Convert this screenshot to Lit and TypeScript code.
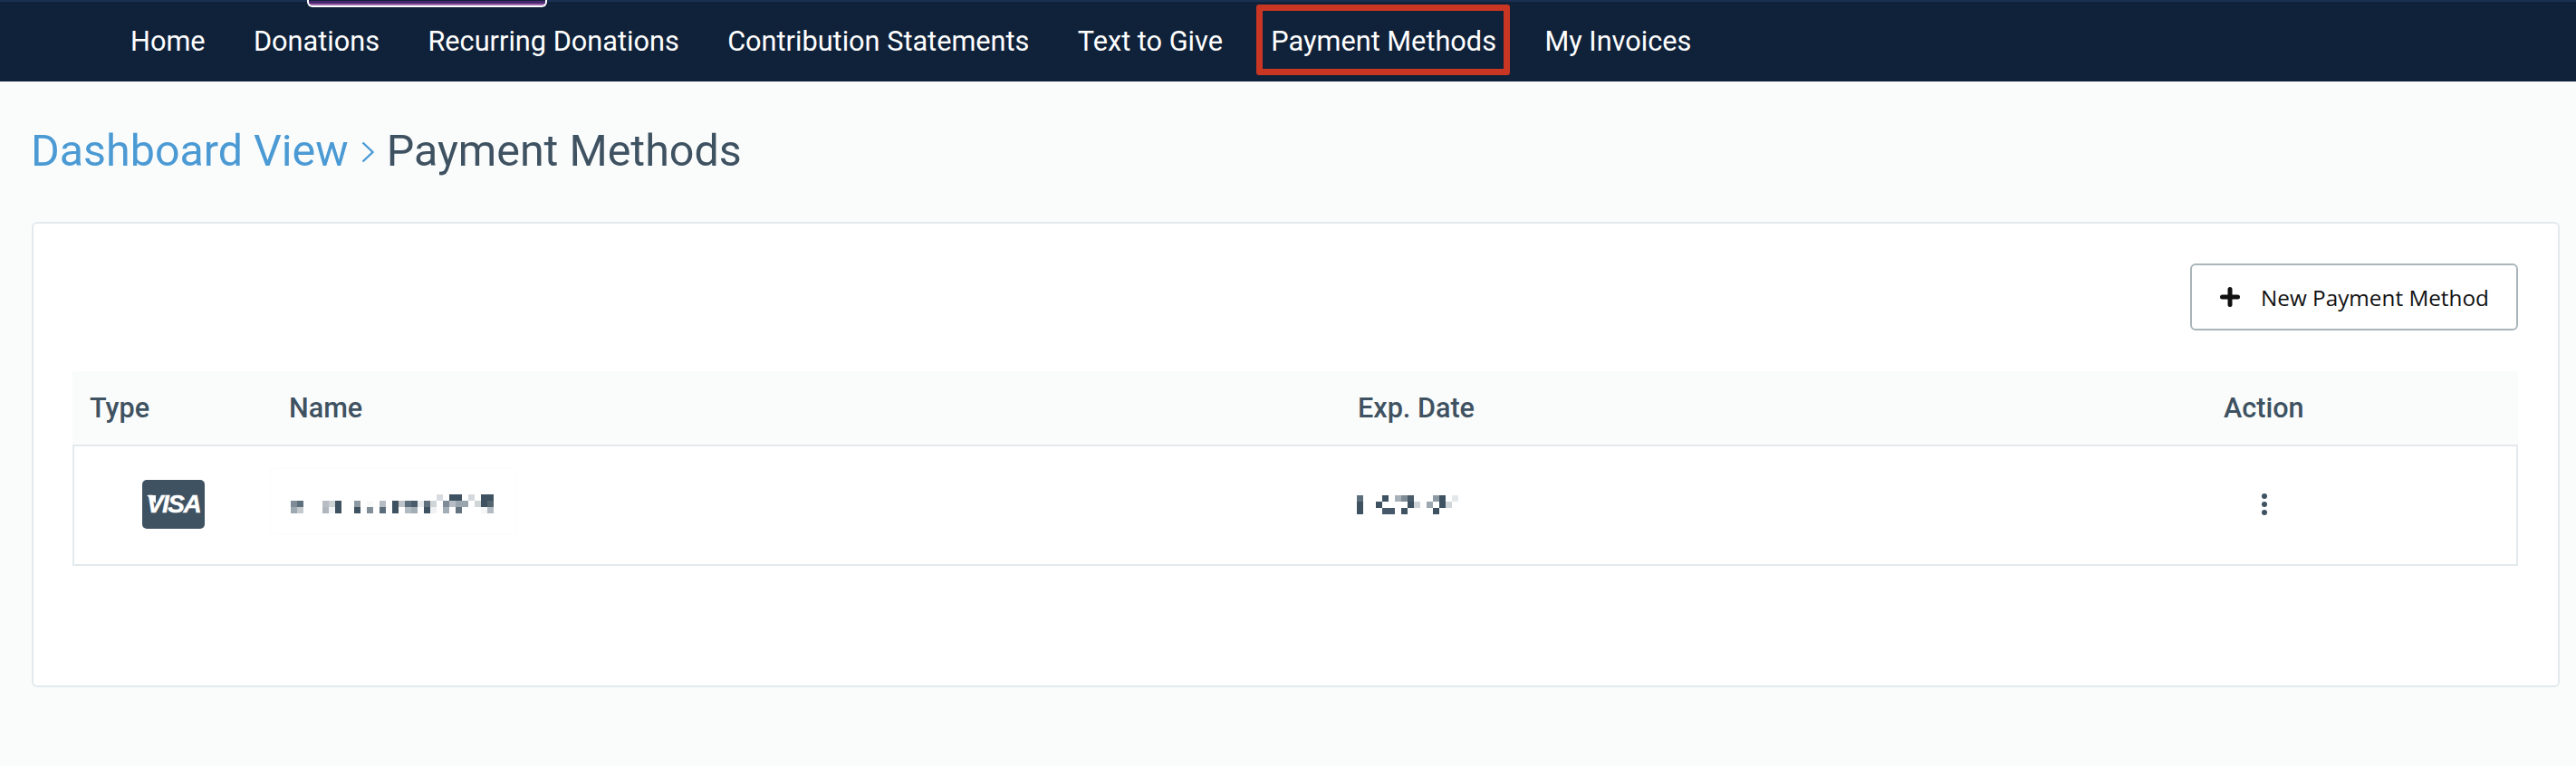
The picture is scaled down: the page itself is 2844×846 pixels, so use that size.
import { LitElement, html, css, svg } from "lit";
import { customElement } from "lit/decorators.js";

const D = "#3f5261";
type Cell = [number, number, string];
const nameCells: Cell[] = [
  [0,23,"#d8dce0"],[0,25,D],[0,26,D],[0,28,"#d5d9dd"],[0,30,D],[0,31,D],
  [1,0,"#7f8c97"],[1,1,"#5d6e7c"],[1,5,"#b8bec4"],[1,6,"#ccd1d4"],[1,7,D],[1,10,"#8d99a3"],[1,12,"#f8fafa"],[1,14,"#b5bcc3"],[1,16,D],[1,17,"#bdc3c8"],[1,18,"#5c6d7b"],[1,19,"#4a5c6a"],[1,20,"#e8ebed"],[1,21,"#5f6f7c"],[1,22,"#d0d5d8"],[1,24,"#7f8c97"],[1,25,"#b6bdc4"],[1,26,"#9aa5ae"],[1,27,"#9aa5ae"],[1,29,"#d0d5d8"],[1,30,D],[1,31,"#54656f"],
  [2,0,"#9ea8b0"],[2,1,"#c3c9cd"],[2,5,"#afb7bd"],[2,6,"#f2f4f5"],[2,7,D],[2,10,D],[2,12,"#838f99"],[2,14,"#5a6b79"],[2,16,D],[2,18,"#b3bbc2"],[2,19,"#a3adb5"],[2,21,D],[2,22,"#eff1f3"],[2,24,"#a3adb5"],[2,26,"#62727f"],[2,30,"#f5f6f8"],[2,31,"#b3bbc2"],
];
const dateCells: Cell[] = [
  [0,0,"#5d6e7c"],[0,4,D],[0,6,"#a8b0b8"],[0,7,"#7f8c97"],[0,8,"#4a5c6a"],[0,12,"#8d99a3"],[0,13,D],[0,15,"#e5e8ea"],
  [1,0,D],[1,3,D],[1,8,D],[1,9,"#cfd4d8"],[1,11,"#9ea8b0"],[1,13,D],[1,14,"#d0d5d8"],
  [2,0,D],[2,4,"#46586a"],[2,5,"#46586a"],[2,7,D],[2,12,D],
];
const mosaic = (cells: Cell[], cols: number) => html`<svg class="mosaic" width=${cols * 7} height="21" viewBox="0 0 ${cols * 7} 21" aria-hidden="true">
  ${cells.map(([r, c, f]) => svg`<rect x=${c * 7} y=${r * 7} width="7" height="7" fill=${f}></rect>`)}
</svg>`;

@customElement("app-root")
export class AppRoot extends LitElement {
  static styles = css`
    :host { display: block; width: 2844px; height: 846px; background: #fafcfc; font-family: Roboto, sans-serif; overflow: hidden; }
    .nav { position: relative; height: 90px; box-sizing: border-box; background: #10223a; border-top: 2px solid #1a3052; display: flex; align-items: center; padding-left: 144px; padding-bottom: 2px; gap: 53.4px; color: #fff; font-size: 30.7px; white-space: nowrap; }
    .promo { position: absolute; left: 339px; top: -2px; width: 265px; height: 8px; box-sizing: border-box; background: linear-gradient(#10223a 0 1px, #4b2670 1px 4px, #9a6aa8 4px); border: 2px solid #fff; border-top: 0; border-radius: 0 0 6px 6px; }
    .active { position: relative; }
    .active::after { content: ""; position: absolute; left: -16px; right: -15px; top: -23px; bottom: -20px; border: 7px solid #c93623; border-radius: 3px; }
    .crumbs { display: flex; align-items: center; padding: 42px 0 0 34px; height: 68px; font-size: 48.4px; color: #3f5261; white-space: nowrap; }
    .crumbs a { color: #4b9ad4; }
    .crumbs svg { margin: 3px 14px 0 14px; }
    .card { margin: 45px 18px 0 35px; height: 514px; box-sizing: border-box; background: #fff; border: 2px solid #e3eaee; border-radius: 6px; padding: 44px 44px 0 43px; }
    .toolbar { display: flex; justify-content: flex-end; }
    .btn { width: 362px; height: 74px; box-sizing: border-box; display: flex; align-items: center; gap: 23px; padding-left: 31px; border: 2px solid #aab5ba; border-radius: 6px; background: #fff; font-family: "Open Sans", sans-serif; font-size: 24.3px; color: #111; }
    .thead, .row { display: grid; align-items: center; }
    .thead { grid-template-columns: 239px 1180px 956px 1fr; margin-top: 45px; height: 81px; background: #fafcfc; font-size: 30.6px; font-weight: 500; color: #3f5261; padding-bottom: 1px; box-sizing: border-box; }
    .thead span:first-child { padding-left: 19px; }
    .row { grid-template-columns: 238px 1178px 956px 1fr; height: 134px; box-sizing: border-box; border: 2px solid #e3eaee; background: #fff; }
    .visa { position: relative; margin: -2px 0 0 75px; width: 69px; height: 54px; border-radius: 5px; background: #3f5261; color: #fff; display: flex; align-items: center; justify-content: center; font: italic 700 28px "Liberation Sans", sans-serif; letter-spacing: -1.5px; -webkit-text-stroke: 0.4px #fff; }
    .visa::before { content: ""; position: absolute; left: 5px; top: 17px; width: 10px; height: 9px; background: #fff; clip-path: polygon(0 0, 100% 0, 100% 100%); }
    .namebox { align-self: start; margin: 24px 0 0 -22px; width: 272px; height: 73px; box-sizing: border-box; border: 1px solid #fbfcfc; border-radius: 3px; padding: 28px 0 0 22px; }
    .mosaic { display: block; }
    .date { margin-top: -1px; }
    .dots { display: flex; flex-direction: column; gap: 3px; margin: -2px 0 0 43px; }
    .dots i { width: 6px; height: 6px; border-radius: 50%; background: #3f5261; }
  `;
  render() {
    const items = ["Home", "Donations", "Recurring Donations", "Contribution Statements", "Text to Give", "Payment Methods", "My Invoices"];
    return html`
      <nav class="nav">
        <div class="promo"></div>
        ${items.map((t) => html`<span class=${t === "Payment Methods" ? "active" : ""}>${t}</span>`)}
      </nav>
      <div class="crumbs">
        <a>Dashboard View</a>
        <svg width="14" height="24" viewBox="0 0 14 24" fill="none" stroke="#4b9ad4" stroke-width="2.4"><path d="M1.5 1.5 L12.5 12 L1.5 22.5"/></svg>
        <span>Payment Methods</span>
      </div>
      <section class="card">
        <div class="toolbar">
          <div class="btn">
            <svg width="22" height="22" viewBox="0 0 22 22" stroke="#111" stroke-width="5" stroke-linecap="round"><path d="M11 2.5V19.5M2.5 11H19.5"/></svg>
            <span>New Payment Method</span>
          </div>
        </div>
        <div class="thead"><span>Type</span><span>Name</span><span>Exp. Date</span><span>Action</span></div>
        <div class="row">
          <div class="visa">VISA</div>
          <div class="namebox">${mosaic(nameCells, 32)}</div>
          <div class="date">${mosaic(dateCells, 16)}</div>
          <div class="dots"><i></i><i></i><i></i></div>
        </div>
      </section>
    `;
  }
}
